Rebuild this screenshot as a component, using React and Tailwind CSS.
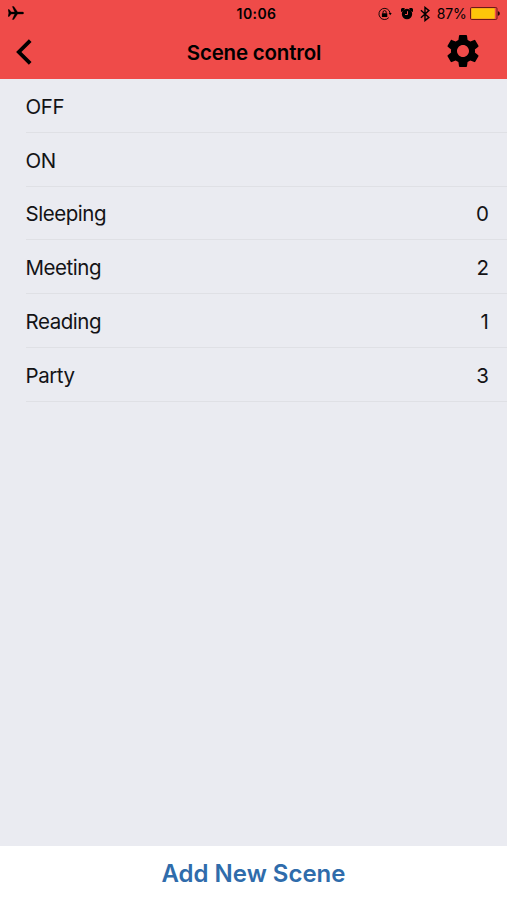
import { MdSettings } from "react-icons/md";

const scenes = [
  { name: "OFF" },
  { name: "ON" },
  { name: "Sleeping", value: 0 },
  { name: "Meeting", value: 2 },
  { name: "Reading", value: 1 },
  { name: "Party", value: 3 },
];

function PlaneIcon() {
  return (
    <svg
      className="-mt-0.5"
      width="16"
      height="14"
      viewBox="0 0 16 14"
      fill="currentColor"
      stroke="currentColor"
      strokeWidth="0.3"
    >
      <path d="M0 3.6h1.2L3.2 5.9h3.5L4.3.4h1.5L9.6 5.9h4.7c.8 0 1.5.5 1.5 1.1s-.7 1.1-1.5 1.1H9.6l-3.8 5.5H4.3l2.4-5.5H3.2l-2 2.3H0L.8 7z" />
    </svg>
  );
}

function RotationLockIcon() {
  return (
    <svg width="14" height="14" viewBox="0 0 14 14" fill="none" stroke="currentColor">
      <path d="M12.1 6.2A5.6 5.6 0 1 0 10.8 10.6" strokeWidth="0.9" />
      <path d="M10.7 6h3l-1.5 2.3z" fill="currentColor" stroke="none" />
      <rect x="3.9" y="6.2" width="5.4" height="3.9" rx="0.4" fill="currentColor" stroke="none" />
      <path d="M5 6.4V5.2a1.6 1.6 0 0 1 3.2 0v1.2" strokeWidth="0.9" />
    </svg>
  );
}

function AlarmIcon() {
  return (
    <svg width="12" height="12" viewBox="0 0 12 12" fill="currentColor">
      <circle cx="6" cy="6" r="5.2" />
      <path d="M.2 3.9A2.2 2.2 0 0 1 3.9.7L2 3zM11.8 3.9A2.2 2.2 0 0 0 8.1.7L10 3z" />
      <path d="M6.5 3.2v3.3H4" fill="none" stroke="#ef4b49" strokeWidth="1" />
    </svg>
  );
}

function BluetoothIcon() {
  return (
    <svg width="10" height="16" viewBox="0 0 10 16" fill="none" stroke="currentColor" strokeWidth="1.4">
      <path d="M.9 4.2l8 7.2L5 14.6V1.4l3.9 3.2-8 7.2" />
    </svg>
  );
}

function BatteryIcon() {
  return (
    <svg width="31" height="13" viewBox="0 0 31 13">
      <rect x="0.5" y="0.5" width="26.5" height="12" rx="1.2" fill="none" stroke="#5c1512" strokeWidth="0.9" />
      <rect x="1.3" y="1.3" width="23.5" height="10.4" rx="0.4" fill="#fdc60a" />
      <path d="M27.9 4.3c1.2.3 1.9 1.1 1.9 2.2s-.7 1.9-1.9 2.2z" fill="#260605" />
    </svg>
  );
}

function StatusBar() {
  return (
    <div className="grid h-[27px] grid-cols-3 items-center pl-2 pr-[6px]">
      <PlaneIcon />
      <span className="pl-1 text-center text-[14px] font-semibold leading-none tracking-[0.4px]">10:06</span>
      <div className="flex items-center justify-end">
        <RotationLockIcon />
        <span className="ml-[9px]">
          <AlarmIcon />
        </span>
        <span className="ml-[7px]">
          <BluetoothIcon />
        </span>
        <span className="ml-[7px] text-[14px] leading-none tracking-[-0.2px]">87%</span>
        <span className="ml-[3.5px]">
          <BatteryIcon />
        </span>
      </div>
    </div>
  );
}

function NavBar() {
  return (
    <div className="grid h-[52px] grid-cols-3 items-center pl-4 pr-6">
      <button aria-label="Back" className="-mt-0.5 w-4">
        <svg width="16" height="26" viewBox="0 0 16 26" fill="none" stroke="currentColor" strokeWidth="3.8">
          <path d="M14.2 1.6L2.8 13l11.4 11.4" />
        </svg>
      </button>
      <h1 className="whitespace-nowrap pl-[9px] text-center text-[20.5px] font-semibold leading-none tracking-[-0.2px]">
        Scene control
      </h1>
      <button aria-label="Settings" className="-mt-1 justify-self-end">
        <MdSettings size={40} />
      </button>
    </div>
  );
}

export default function App() {
  return (
    <div className="flex h-screen w-full flex-col overflow-hidden bg-[#eaebf1] font-['Inter','Liberation_Sans',sans-serif] text-black">
      <header className="h-[79px] shrink-0 bg-[#ef4b49]">
        <StatusBar />
        <NavBar />
      </header>

      <ul className="flex-1 pl-[25.5px]">
        {scenes.map((scene) => (
          <li
            key={scene.name}
            className="flex h-[53.75px] items-center justify-between border-b border-[#dfe0e5] pr-[18.5px] pt-[3.5px] text-[20.5px] tracking-[-0.45px] text-[#131316]"
          >
            <span>{scene.name}</span>
            <span>{scene.value}</span>
          </li>
        ))}
      </ul>

      <button className="h-[54px] shrink-0 bg-white pt-px text-center text-[24px] font-semibold text-[#2f6cab]">
        Add New Scene
      </button>
    </div>
  );
}
